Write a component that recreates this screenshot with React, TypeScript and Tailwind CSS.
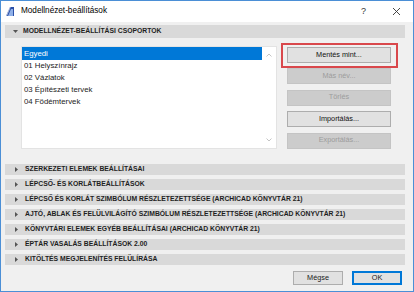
import React from 'react';

const groups = ['Egyedi', '01 Helyszínrajz', '02 Vázlatok', '03 Építészeti tervek', '04 Födémtervek'];

const sections = [
  'SZERKEZETI ELEMEK BEÁLLÍTÁSAI',
  'LÉPCSŐ- ÉS KORLÁTBEÁLLÍTÁSOK',
  'LÉPCSŐ ÉS KORLÁT SZIMBÓLUM RÉSZLETEZETTSÉGE (ARCHICAD KÖNYVTÁR 21)',
  'AJTÓ, ABLAK ÉS FELÜLVILÁGÍTÓ SZIMBÓLUM RÉSZLETEZETTSÉGE (ARCHICAD KÖNYVTÁR 21)',
  'KÖNYVTÁRI ELEMEK EGYÉB BEÁLLÍTÁSAI (ARCHICAD KÖNYVTÁR 21)',
  'ÉPTÁR VASALÁS BEÁLLÍTÁSOK 2.00',
  'KITÖLTÉS MEGJELENÍTÉS FELÜLÍRÁSA',
];

const buttons = [
  { label: 'Mentés mint...', enabled: true, marked: true },
  { label: 'Más név...', enabled: false },
  { label: 'Törlés', enabled: false },
  { label: 'Importálás...', enabled: true },
  { label: 'Exportálás...', enabled: false },
];

const Arrow = ({ open }: { open?: boolean }) => (
  <svg width="5" height="5" viewBox="0 0 5 5" className="shrink-0">
    {open ? <path d="M0 1 L5 1 L2.5 4 Z" fill="#555" /> : <path d="M1 0 L4 2.5 L1 5 Z" fill="#555" />}
  </svg>
);

const SectionBar = ({ title, open }: { title: string; open?: boolean }) => (
  <div className={`flex items-center bg-[#d9d9d9] ${open ? 'h-[13px] pl-[8px] gap-[5px]' : 'h-[11px] pl-[9px] gap-[6px]'}`}>
    <Arrow open={open} />
    <span className="text-[6.8px] font-bold leading-none text-[#1e1e1e] whitespace-nowrap">{title}</span>
  </div>
);

export default function App() {
  return (
    <div className="w-[414px] h-[292px] border border-[#4b8fd6] bg-[#f0f0f0] flex flex-col overflow-hidden font-['Liberation_Sans',Arial,sans-serif] text-[#1a1a1a]">
      {/* Fejléc */}
      <div className="h-[21px] bg-white flex items-center pl-[4px] shrink-0">
        <svg width="10" height="11" viewBox="0 0 10 11" className="mr-[6px]">
          <path d="M1 10 L5 1 L9 1 L9 10 Z" fill="#2a4fa8" />
          <path d="M3 10 L6 3 L8 3 L8 10 Z" fill="#8fb0e8" />
          <path d="M1 10 L5 1 L5.8 1 L2 10 Z" fill="#ffffff" opacity="0.6" />
        </svg>
        <span className="text-[8.2px] text-black">Modellnézet-beállítások</span>
        <span className="ml-auto text-[9px] text-[#333] mr-[26px]">?</span>
        <svg width="9" height="9" viewBox="0 0 9 9" className="mr-[12px]">
          <path d="M1 1 L8 8 M8 1 L1 8" stroke="#333" strokeWidth="0.9" />
        </svg>
      </div>

      <div className="flex-1 flex flex-col pl-[4px] pr-[8px] pt-[3px]">
        <SectionBar open title="MODELLNÉZET-BEÁLLÍTÁSI CSOPORTOK" />

        <div className="flex pl-[16px] pt-[8px]">
          {/* Lista */}
          <div className="w-[256px] h-[103px] border border-[#e3e3e3] bg-white flex">
            <div className="flex-1 flex flex-col">
              {groups.map((g, i) => (
                <div
                  key={g}
                  className={`flex items-center pl-[2px] text-[7.8px] ${i === 0 ? 'h-[13px] bg-[#0078d7] text-white' : 'h-[12px] text-[#222]'}`}
                >
                  {g}
                </div>
              ))}
            </div>
            <div className="w-[14px] flex flex-col items-center justify-between py-[6px]">
              <svg width="6" height="4" viewBox="0 0 6 4"><path d="M0.5 3.5 L3 1 L5.5 3.5" stroke="#b5b5b5" fill="none" strokeWidth="0.8" /></svg>
              <svg width="6" height="4" viewBox="0 0 6 4"><path d="M0.5 0.5 L3 3 L5.5 0.5" stroke="#b5b5b5" fill="none" strokeWidth="0.8" /></svg>
            </div>
          </div>

          {/* Gombok */}
          <div className="ml-[10px] flex flex-col gap-[5.4px] pt-[1px]">
            {buttons.map((b) => (
              <div key={b.label} className="relative">
                <div
                  className={`w-[104px] h-[16px] flex items-center justify-center text-[7.3px] border ${
                    b.enabled ? 'bg-[#e1e1e1] border-[#adadad] text-[#111]' : 'bg-[#cccccc] border-[#c4c4c4] text-[#9c9c9c]'
                  }`}
                >
                  {b.label}
                </div>
                {b.marked && (
                  <div className="absolute -left-[6px] -right-[7px] -top-[4px] -bottom-[5px] border-2 border-[#d9484c]" />
                )}
              </div>
            ))}
          </div>
        </div>

        {/* Összecsukott szakaszok */}
        <div className="mt-[15px] flex flex-col gap-[4px]">
          {sections.map((s) => (
            <SectionBar key={s} title={s} />
          ))}
        </div>

        {/* Lábléc */}
        <div className="mt-auto mb-[6px] mr-[3px] flex justify-end gap-[9px]">
          <div className="w-[50px] h-[14px] flex items-center justify-center bg-[#e1e1e1] border border-[#adadad] text-[7.3px]">Mégse</div>
          <div className="w-[50px] h-[14px] flex items-center justify-center bg-[#e1e1e1] border-2 border-[#0078d7] text-[7.3px]">OK</div>
        </div>
      </div>
    </div>
  );
}
